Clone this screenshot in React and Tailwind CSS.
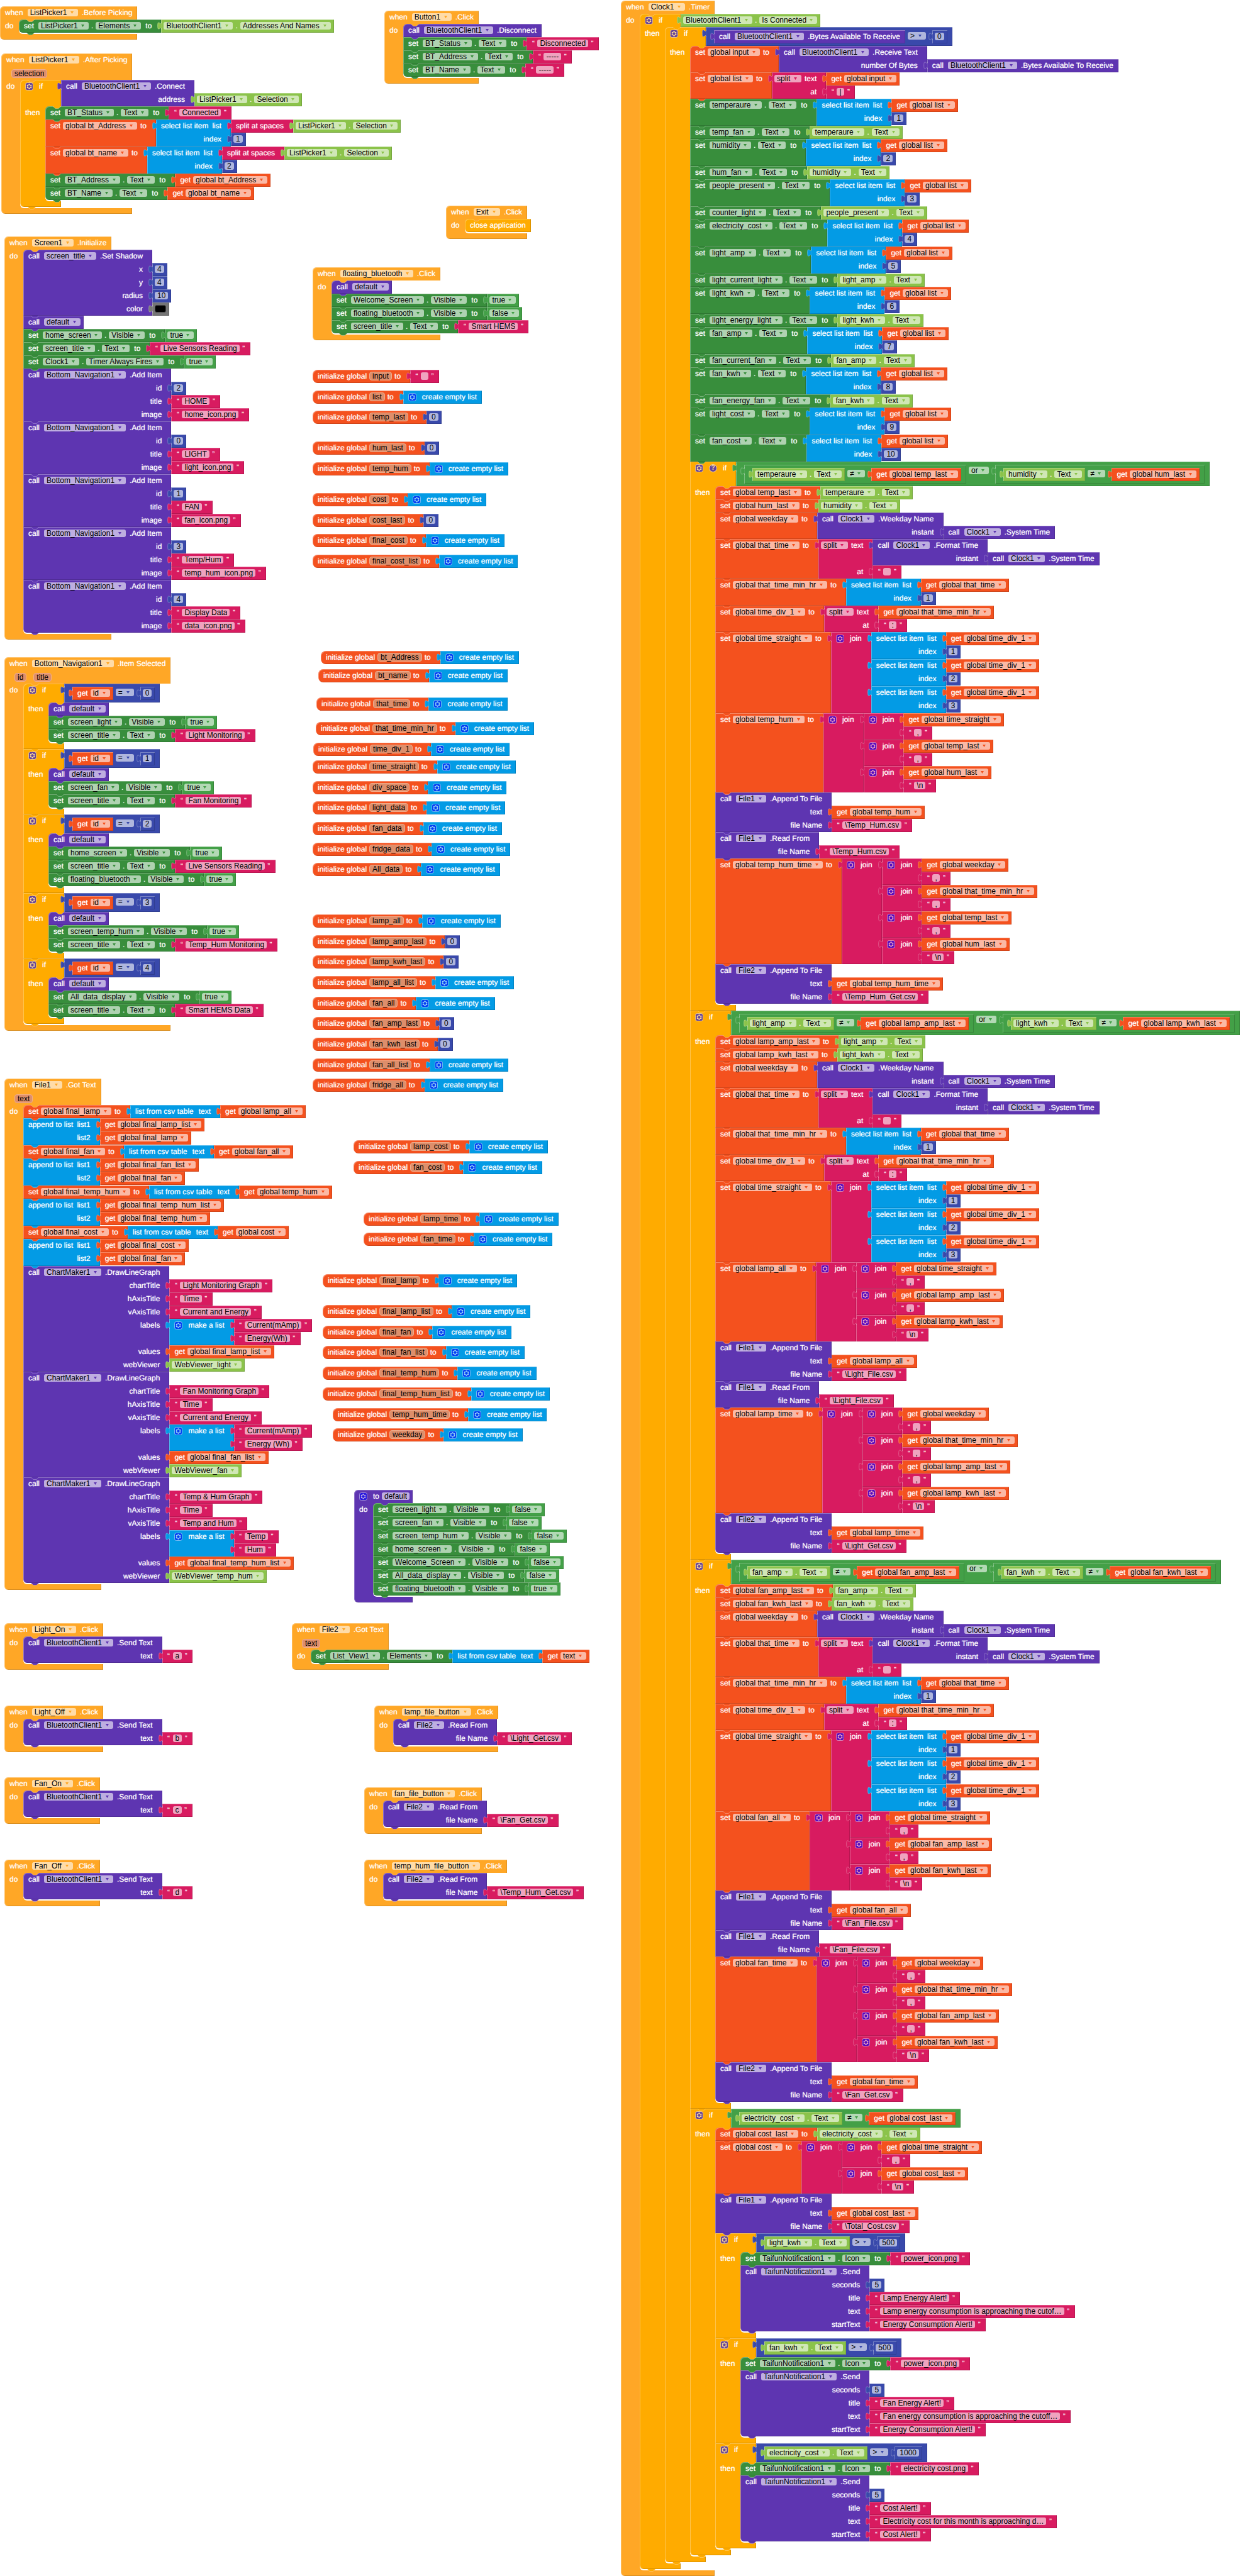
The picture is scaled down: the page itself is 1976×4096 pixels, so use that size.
import React from "react";

/* ---------- palette ---------- */

const COLORS = {
  event: { bg: "bg-[#ffa726]", ink: "text-[#ffa726]" },
  control: { bg: "bg-[#ffab00]", ink: "text-[#ffab00]" },
  logic: { bg: "bg-[#43a047]", ink: "text-[#43a047]" },
  math: { bg: "bg-[#3949ab]", ink: "text-[#3949ab]" },
  text: { bg: "bg-[#d81b60]", ink: "text-[#d81b60]" },
  list: { bg: "bg-[#039be5]", ink: "text-[#039be5]" },
  color: { bg: "bg-[#757575]", ink: "text-[#757575]" },
  variable: { bg: "bg-[#f4511e]", ink: "text-[#f4511e]" },
  method: { bg: "bg-[#5e35b1]", ink: "text-[#5e35b1]" },
  setter: { bg: "bg-[#388e3c]", ink: "text-[#388e3c]" },
  getter: { bg: "bg-[#8bc34a]", ink: "text-[#8bc34a]" },
};

const BEVEL =
  "shadow-[inset_1px_1px_0_rgba(255,255,255,0.3),inset_-1px_-1px_0_rgba(0,0,0,0.15)]";
const BEVEL_LAST =
  "rounded-bl-[6px] shadow-[inset_1px_1px_0_rgba(255,255,255,0.3),inset_-1px_-1px_0_rgba(0,0,0,0.15),0_2px_0_#ffffff]";
const LABEL = "text-white [text-shadow:0_0_1px_rgba(255,255,255,0.7)]";

/* ---------- field builders ---------- */

const lab = (t, c = "") => ({ kind: "label", t, c });
const dd = (t) => ({ kind: "drop", t });
const inp = (t, label) => ({ kind: "input", t, label });
const nam = (t) => ({ kind: "name", t });
const gear = { kind: "gear" };
const help = { kind: "help" };
const open = { kind: "quote", t: "\u201c" };
const close = { kind: "quote", t: "\u201d" };

/* ---------- value builders ---------- */

const get = (n) => ({ color: "variable", rows: [{ items: [lab("get"), dd(n)] }] });
const gget = (n) => get("global " + n);
const prop = (c, p) => ({ color: "getter", rows: [{ items: [dd(c), lab("."), dd(p)] }] });
const comp = (c) => ({ color: "getter", rows: [{ items: [dd(c)] }] });
const txt = (s) => ({ color: "text", rows: [{ items: [open, inp(s, "Text"), close] }] });
const num = (n) => ({ color: "math", rows: [{ items: [inp(String(n), "Number")] }] });
const bool = (v) => ({ color: "logic", rows: [{ items: [dd(v)] }] });
const emptyList = {
  color: "list",
  rows: [{ items: [gear, lab("create empty list")] }],
};
const select = (list, index) => ({
  color: "list",
  rows: [
    { items: [lab("select list item", "mr-0.5"), lab("list")], child: list },
    { items: [lab("index")], child: num(index), tall: true },
  ],
});
const split = (text, at) => ({
  color: "text",
  rows: [
    { items: [dd("split"), lab("text", "ml-px")], child: text },
    { items: [lab("at")], child: txt(at) },
  ],
});
const splitSpaces = (text) => ({
  color: "text",
  rows: [{ items: [lab("split at spaces")], child: text }],
});
const join = (...parts) => ({
  color: "text",
  rows: parts.map((child, i) => ({ items: i === 0 ? [gear, lab("join")] : [], child })),
});
const makeList = (...parts) => ({
  color: "list",
  rows: parts.map((child, i) => ({ items: i === 0 ? [gear, lab("make a list")] : [], child })),
});
const csv = (text) => ({
  color: "list",
  rows: [{ items: [lab("list from csv table", "mr-1"), lab("text")], child: text }],
});
const infix = (color, a, op, b) => ({ color, inline: true, a, op, b });

/* ---------- statement builders ---------- */

const call = (component, method, params = []) => ({
  color: "method",
  rows: [
    { items: [lab("call", "mr-[3px]"), dd(component), lab("." + method, "ml-0.5")] },
    ...params.map(([name, child]) => ({ items: [lab(name)], child })),
  ],
});
const callProc = (name) => ({
  color: "method",
  rows: [{ items: [lab("call", "mr-[3px]"), dd(name)] }],
});
const set = (c, p, child) => ({
  color: "setter",
  rows: [
    { items: [lab("set", "mr-[3px]"), dd(c), lab("."), dd(p), lab("to", "ml-[3px]")], child },
  ],
});
const gset = (n, child) => ({
  color: "variable",
  rows: [{ items: [lab("set"), dd("global " + n), lab("to", "ml-px")], child }],
});
const append = (a, b) => ({
  color: "list",
  rows: [
    { items: [lab("append to list", "mr-0.5"), lab("list1")], child: a },
    { items: [lab("list2")], child: b, tall: true },
  ],
});
const iff = (cond, body, extra = []) => ({
  clamp: true,
  color: "control",
  head: [gear, ...extra, lab("if")],
  cond,
  label: "then",
  body,
});
const when = (component, event, body, params) => ({
  clamp: true,
  top: true,
  color: "event",
  head: [lab("when", "mr-[3px]"), dd(component), lab("." + event, "ml-0.5")],
  params,
  label: "do",
  body,
});
const init = (name, child) => ({
  top: true,
  pill: true,
  color: "variable",
  rows: [{ items: [lab("initialize global"), nam(name), lab("to")], child }],
});

/* ---------- field rendering ---------- */

function Gear() {
  return (
    <button
      type="button"
      aria-label="Block options"
      className="mr-[5px] size-[13px] shrink-0 opacity-60"
    >
      <svg viewBox="0 0 16 16" className="block size-[13px]">
        <rect x="0.5" y="0.5" width="15" height="15" rx="4" fill="#0000ff" stroke="#ffffff" />
        <path
          fill="#ffffff"
          d="m4.203,7.296 0,1.368 -0.92,0.677 -0.11,0.41 0.9,1.59 0.41,0.11 1.043,-0.457 1.187,0.683 0.127,1.134 0.3,0.3 1.8,0 0.3,-0.299 0.127,-1.138 1.185,-0.682 1.046,0.458 0.409,-0.11 0.9,-1.59 -0.11,-0.41 -0.92,-0.677 0,-1.366 0.92,-0.677 0.11,-0.41 -0.9,-1.59 -0.409,-0.109 -1.046,0.458 -1.185,-0.682 -0.127,-1.138 -0.3,-0.299 -1.8,0 -0.3,0.3 -0.126,1.135 -1.187,0.682 -1.043,-0.457 -0.41,0.11 -0.899,1.59 0.108,0.409z"
        />
        <circle cx="8" cy="8" r="2.7" fill="#0000ff" />
      </svg>
    </button>
  );
}

function Help() {
  return (
    <button
      type="button"
      aria-label="Comment"
      className="mr-[5px] flex size-[13px] shrink-0 items-center justify-center rounded-full border border-white bg-[#0000ff] text-[10px] leading-none font-bold text-white opacity-60"
    >
      ?
    </button>
  );
}

function Drop({ t, color }) {
  return (
    <span
      className={
        "relative flex h-3 shrink-0 items-center rounded-[3px] bg-white/60 " + COLORS[color].ink
      }
    >
      <select
        aria-label={t}
        className="-my-1 h-5 appearance-none bg-transparent pr-[17px] pl-1 text-[12px] leading-5 text-black outline-none"
      >
        <option>{t}</option>
      </select>
      <svg
        viewBox="0 0 5 4"
        className="pointer-events-none absolute top-1 right-[7px] h-1 w-[5px]"
      >
        <path d="M0 0h5L2.5 4z" fill="currentColor" />
      </svg>
    </span>
  );
}

function TextBox({ label, value, box }) {
  return (
    <span className={"flex min-w-3 shrink-0 items-center " + box}>
      <input
        type="text"
        aria-label={label}
        defaultValue={value}
        className="-my-1 field-sizing-content h-5 min-w-3 bg-transparent px-1 text-[12px] leading-5 text-black outline-none"
      />
    </span>
  );
}

function Field({ f, color }) {
  switch (f.kind) {
    case "label":
      return <span className={"whitespace-pre " + LABEL + " " + f.c}>{f.t}</span>;
    case "drop":
      return <Drop t={f.t} color={color} />;
    case "input":
      return <TextBox label={f.label} value={f.t} box="h-3 rounded-[3px] bg-white/60" />;
    case "name":
      return (
        <TextBox
          label="Name"
          value={f.t}
          box="h-[14px] rounded-[4px] border border-[#f0ad8c] bg-[#dd8e6b]"
        />
      );
    case "quote":
      return (
        <span className="w-[5px] self-start pt-[3px] text-center text-[9px] leading-[12px] font-bold text-white">
          {f.t}
        </span>
      );
    case "swatch":
      return (
        <button
          type="button"
          aria-label="Black"
          className="h-3 w-[18px] rounded-[3px] border border-[#4a4a4a] bg-black"
        />
      );
    case "help":
      return <Help />;
    default:
      return <Gear />;
  }
}

const isBox = (f) => f && ["drop", "input", "swatch"].includes(f.kind);

function Tab({ color }) {
  return (
    <svg
      viewBox="0 0 8 15"
      className={"absolute top-1 -left-[6px] h-3 w-[7px] " + COLORS[color].ink}
    >
      <path d="M8 0c0 10-8-8-8 7.5s8-2.5 8 7.5z" fill="currentColor" />
      <path
        d="M8 0c0 10-7.500-8-7.500 7.500s7.500-2.500 7.500 7.500"
        fill="none"
        stroke="#ffffff"
        strokeOpacity="0.35"
      />
    </svg>
  );
}

function Bump({ color, place }) {
  return (
    <svg
      viewBox="0 0 13 4"
      className={"absolute z-10 h-1 w-[13px] " + place + " " + COLORS[color].ink}
    >
      <path d="M0 0h13L9 3.5H4z" fill="currentColor" />
      <path d="M0 0L4 3.5H9L13 0" fill="none" stroke="#ffffff" strokeOpacity="0.3" />
    </svg>
  );
}

/* ---------- block rendering ---------- */

function LabelCell({ row, color, hasInputs, line }) {
  const first = row.items[0];
  const last = row.items[row.items.length - 1];
  const left = isBox(first) ? "pl-1" : "pl-2";
  const right = row.child || hasInputs ? "pr-[15px]" : isBox(last) ? "pr-[5px]" : "pr-2";
  const align = row.child ? "justify-end" : "justify-start";
  const height = row.tall ? "h-[22px]" : "h-[21px]";
  return (
    <div className={"relative col-start-1 " + height} style={{ gridRow: line }}>
      <div className={"flex h-5 items-center gap-1 " + left + " " + right + " " + align}>
        {row.items.map((f, i) => (
          <Field key={i} f={f} color={color} />
        ))}
      </div>
    </div>
  );
}

function Rows({ b, shape }) {
  const hasInputs = b.rows.some((r) => r.child);
  return (
    <div
      className="grid grid-cols-[max-content_max-content] items-start"
      style={{ gridTemplateRows: "repeat(" + b.rows.length + ", auto)" }}
    >
      <div
        className={"relative col-start-1 row-span-full h-full " + COLORS[b.color].bg + " " + shape}
      />
      {b.rows.map((r, i) => (
        <React.Fragment key={i}>
          <LabelCell row={r} color={b.color} hasInputs={hasInputs} line={i + 1} />
          {r.child && (
            <div className="col-start-2 flex items-start" style={{ gridRow: i + 1 }}>
              <Value b={r.child} />
            </div>
          )}
        </React.Fragment>
      ))}
    </div>
  );
}

function Value({ b }) {
  if (b.inline) {
    return (
      <div
        className={
          "relative flex items-start pt-[5px] pr-2 pb-1 pl-[13px] " + COLORS[b.color].bg + " " + BEVEL
        }
      >
        <Tab color={b.color} />
        <Value b={b.a} />
        <div className="mt-[3px] mr-[10px] ml-1">
          <Drop t={b.op} color={b.color} />
        </div>
        <Value b={b.b} />
      </div>
    );
  }
  return (
    <div className="relative">
      <Rows b={b} shape={BEVEL} />
      <Tab color={b.color} />
    </div>
  );
}

function Stack({ list }) {
  return (
    <div className="relative flex shrink-0 flex-col items-start pb-0.5">
      {list.map((s, i) => (
        <Statement key={i} b={s} first={i === 0} last={i === list.length - 1} />
      ))}
    </div>
  );
}

function Statement({ b, first, last }) {
  const topCorner = first || b.top ? " rounded-tl-[6px]" : "";
  if (!b.clamp) {
    const bottom = b.pill ? BEVEL + " rounded-l-[8px]" : last ? BEVEL_LAST : BEVEL;
    return (
      <div className="relative">
        <Rows b={b} shape={bottom + (b.pill ? "" : topCorner)} />
        {!b.top && !b.end && <Bump color={b.color} place="top-full left-3" />}
      </div>
    );
  }
  const bg = COLORS[b.color].bg;
  const isIf = b.label === "then";
  return (
    <div className="relative grid grid-cols-[max-content_max-content] items-start">
      <div
        className={
          "h-full shadow-[inset_1px_1px_0_rgba(255,255,255,0.3),inset_-1px_0_0_rgba(0,0,0,0.12)] " +
          bg +
          topCorner +
          (isIf ? " min-w-[65px]" : "")
        }
      >
        <div
          className={
            "flex h-5 items-center gap-1 pl-2 " +
            (isIf ? "pr-[15px]" : isBox(b.head[b.head.length - 1]) ? "pr-[5px]" : "pr-2")
          }
        >
          {b.head.map((f, i) => (
            <Field key={i} f={f} color={b.color} />
          ))}
        </div>
        <div className="h-px" />
        {b.params && (
          <div className="flex h-[21px] items-center gap-[11px] pl-4">
            {b.params.map((p) => (
              <Field key={p} f={nam(p)} color={b.color} />
            ))}
          </div>
        )}
      </div>
      <div className="col-start-2 flex">{b.cond && <Value b={b.cond} />}</div>
      <div className="col-start-1 flex w-0">
        <div
          className={
            "-mr-[6px] shrink-0 pl-2 shadow-[inset_1px_0_0_rgba(255,255,255,0.3)] " +
            LABEL +
            " " +
            bg +
            (isIf ? " w-[46px]" : " w-9")
          }
        >
          <div className="flex h-5 items-center">{b.label}</div>
        </div>
        <div className="relative shrink-0">
          <Stack list={b.body} />
          <Bump color={b.color} place="top-0 left-3" />
        </div>
      </div>
      <div
        className={
          "relative col-start-1 h-[9px] " +
          bg +
          (b.top
            ? " rounded-bl-[6px] shadow-[inset_1px_0_0_rgba(255,255,255,0.3),inset_-1px_-1px_0_rgba(0,0,0,0.15)]"
            : last
              ? " rounded-bl-[6px] shadow-[inset_1px_0_0_rgba(255,255,255,0.3),inset_-1px_-1px_0_rgba(0,0,0,0.15),0_2px_0_#ffffff]"
              : " shadow-[inset_1px_0_0_rgba(255,255,255,0.3),inset_-1px_-1px_0_rgba(0,0,0,0.15)]")
        }
      />
      {!b.top && <Bump color={b.color} place="top-full left-3" />}
    </div>
  );
}

/* ---------- program ---------- */

const navItem = (id, title, image) =>
  call("Bottom_Navigation1", "Add Item", [
    ["id", num(id)],
    ["title", txt(title)],
    ["image", txt(image)],
  ]);

const navCase = (id, body) => iff(infix("math", get("id"), "=", num(id)), [callProc("default"), ...body]);

const show = (c, v = "true") => set(c, "Visible", bool(v));
const title = (t) => set("screen_title", "Text", txt(t));

const chart = (name, axis, labels, values, viewer) =>
  call("ChartMaker1", "DrawLineGraph", [
    ["chartTitle", txt(name)],
    ["hAxisTitle", txt("Time")],
    ["vAxisTitle", txt(axis)],
    ["labels", makeList(...labels.map(txt))],
    ["values", gget(values)],
    ["webViewer", comp(viewer)],
  ]);

const sendText = (button, t) =>
  when(button, "Click", [call("BluetoothClient1", "Send Text", [["text", txt(t)]])]);

const readFile = (button, file) =>
  when(button, "Click", [call("File2", "Read From", [["file Name", txt(file)]])]);

const reading = (label, index) => set(label, "Text", select(gget("list"), index));
const mirror = (label, source) => set(label, "Text", prop(source, "Text"));
const differs = (label, last) => infix("logic", prop(label, "Text"), "\u2260", gget(last));
const systemTime = call("Clock1", "System Time");

const joined = (parts) =>
  join(...parts.map((p, i) => join(gget(p), txt(i === parts.length - 1 ? "\\n" : ","))));

const logSection = ({ a, b, all, time, file, getFile, extra }) =>
  iff(
    infix("logic", differs(a[0], a[1]), "or", differs(b[0], b[1])),
    [
      gset(a[1], prop(a[0], "Text")),
      gset(b[1], prop(b[0], "Text")),
      gset("weekday", call("Clock1", "Weekday Name", [["instant", systemTime]])),
      gset("that_time", split(call("Clock1", "Format Time", [["instant", systemTime]]), " ")),
      gset("that_time_min_hr", select(gget("that_time"), 1)),
      gset("time_div_1", split(gget("that_time_min_hr"), ":")),
      gset(
        "time_straight",
        join(
          select(gget("time_div_1"), 1),
          select(gget("time_div_1"), 2),
          select(gget("time_div_1"), 3)
        )
      ),
      gset(all, joined(["time_straight", a[1], b[1]])),
      call("File1", "Append To File", [
        ["text", gget(all)],
        ["file Name", txt(file)],
      ]),
      call("File1", "Read From", [["file Name", txt(file)]]),
      gset(time, joined(["weekday", "that_time_min_hr", a[1], b[1]])),
      call("File2", "Append To File", [
        ["text", gget(time)],
        ["file Name", txt(getFile)],
      ]),
    ],
    extra
  );

const alertCase = (label, limit, icon, name, message, start) =>
  iff(infix("math", prop(label, "Text"), ">", num(limit)), [
    set("TaifunNotification1", "Icon", txt(icon)),
    call("TaifunNotification1", "Send", [
      ["seconds", num(5)],
      ["title", txt(name)],
      ["text", txt(message)],
      ["startText", txt(start)],
    ]),
  ]);

const timer = when("Clock1", "Timer", [
  iff(prop("BluetoothClient1", "Is Connected"), [
    iff(
      infix("math", call("BluetoothClient1", "Bytes Available To Receive"), ">", num(0)),
      [
        gset(
          "input",
          call("BluetoothClient1", "Receive Text", [
            ["number Of Bytes", call("BluetoothClient1", "Bytes Available To Receive")],
          ])
        ),
        gset("list", split(gget("input"), "|")),
        reading("temperaure", 1),
        mirror("temp_fan", "temperaure"),
        reading("humidity", 2),
        mirror("hum_fan", "humidity"),
        reading("people_present", 3),
        mirror("counter_light", "people_present"),
        reading("electricity_cost", 4),
        reading("light_amp", 5),
        mirror("light_current_light", "light_amp"),
        reading("light_kwh", 6),
        mirror("light_energy_light", "light_kwh"),
        reading("fan_amp", 7),
        mirror("fan_current_fan", "fan_amp"),
        reading("fan_kwh", 8),
        mirror("fan_energy_fan", "fan_kwh"),
        reading("light_cost", 9),
        reading("fan_cost", 10),
        logSection({
          a: ["temperaure", "temp_last"],
          b: ["humidity", "hum_last"],
          all: "temp_hum",
          time: "temp_hum_time",
          file: "\\Temp_Hum.csv",
          getFile: "\\Temp_Hum_Get.csv",
          extra: [help],
        }),
        logSection({
          a: ["light_amp", "lamp_amp_last"],
          b: ["light_kwh", "lamp_kwh_last"],
          all: "lamp_all",
          time: "lamp_time",
          file: "\\Light_File.csv",
          getFile: "\\Light_Get.csv",
        }),
        logSection({
          a: ["fan_amp", "fan_amp_last"],
          b: ["fan_kwh", "fan_kwh_last"],
          all: "fan_all",
          time: "fan_time",
          file: "\\Fan_File.csv",
          getFile: "\\Fan_Get.csv",
        }),
        iff(differs("electricity_cost", "cost_last"), [
          gset("cost_last", prop("electricity_cost", "Text")),
          gset("cost", joined(["time_straight", "cost_last"])),
          call("File1", "Append To File", [
            ["text", gget("cost_last")],
            ["file Name", txt("\\Total_Cost.csv")],
          ]),
          alertCase(
            "light_kwh",
            500,
            "power_icon.png",
            "Lamp Energy Alert!",
            "Lamp energy consumption is approaching the cutof\u2026",
            "Energy Consumption Alert!"
          ),
          alertCase(
            "fan_kwh",
            500,
            "power_icon.png",
            "Fan Energy Alert!",
            "Fan energy consumption is approaching the cutoff\u2026",
            "Energy Consumption Alert!"
          ),
          alertCase(
            "electricity_cost",
            1000,
            "electricity cost.png",
            "Cost Alert!",
            "Electricity cost for this month is approaching d\u2026",
            "Cost Alert!"
          ),
        ]),
      ]
    ),
  ]),
]);

const defaultProc = {
  clamp: true,
  top: true,
  color: "method",
  head: [gear, lab("to"), inp("default", "Procedure name")],
  label: "do",
  body: [
    show("screen_light", "false"),
    show("screen_fan", "false"),
    show("screen_temp_hum", "false"),
    show("home_screen", "false"),
    show("Welcome_Screen", "false"),
    show("All_data_display", "false"),
    show("floating_bluetooth"),
  ],
};

/* Places of the top-level blocks on the workspace: x, y, block. */
const WORKSPACE = [
  [0, 10, when("ListPicker1", "Before Picking", [
    set("ListPicker1", "Elements", prop("BluetoothClient1", "Addresses And Names")),
  ])],
  [2, 85, when("ListPicker1", "After Picking", [
    iff(call("BluetoothClient1", "Connect", [["address", prop("ListPicker1", "Selection")]]), [
      set("BT_Status", "Text", txt("Connected")),
      gset("bt_Address", select(splitSpaces(prop("ListPicker1", "Selection")), 1)),
      gset("bt_name", select(splitSpaces(prop("ListPicker1", "Selection")), 2)),
      set("BT_Address", "Text", gget("bt_Address")),
      set("BT_Name", "Text", gget("bt_name")),
    ]),
  ], ["selection"])],
  [7, 376, when("Screen1", "Initialize", [
    call("screen_title", "Set Shadow", [
      ["x", num(4)],
      ["y", num(4)],
      ["radius", num(10)],
      ["color", { color: "color", rows: [{ items: [{ kind: "swatch" }] }] }],
    ]),
    callProc("default"),
    show("home_screen"),
    title("Live Sensors Reading"),
    set("Clock1", "Timer Always Fires", bool("true")),
    navItem(2, "HOME", "home_icon.png"),
    navItem(0, "LIGHT", "light_icon.png"),
    navItem(1, "FAN", "fan_icon.png"),
    navItem(3, "Temp/Hum", "temp_hum_icon.png"),
    navItem(4, "Display Data", "data_icon.png"),
  ])],
  [7, 1045, when("Bottom_Navigation1", "Item Selected", [
    navCase(0, [show("screen_light"), title("Light Monitoring")]),
    navCase(1, [show("screen_fan"), title("Fan Monitoring")]),
    navCase(2, [show("home_screen"), title("Live Sensors Reading"), show("floating_bluetooth")]),
    navCase(3, [show("screen_temp_hum"), title("Temp_Hum Monitoring")]),
    navCase(4, [show("All_data_display"), title("Smart HEMS Data")]),
  ], ["id", "title"])],
  [7, 1715, when("File1", "Got Text", [
    gset("final_lamp", csv(gget("lamp_all"))),
    append(gget("final_lamp_list"), gget("final_lamp")),
    gset("final_fan", csv(gget("fan_all"))),
    append(gget("final_fan_list"), gget("final_fan")),
    gset("final_temp_hum", csv(gget("temp_hum"))),
    append(gget("final_temp_hum_list"), gget("final_temp_hum")),
    gset("final_cost", csv(gget("cost"))),
    append(gget("final_cost"), gget("final_fan")),
    chart("Light Monitoring Graph", "Current and Energy", ["Current(mAmp)", "Energy(Wh)"], "final_lamp_list", "WebViewer_light"),
    chart("Fan Monitoring Graph", "Current and Energy", ["Current(mAmp)", "Energy (Wh)"], "final_fan_list", "WebViewer_fan"),
    chart("Temp & Hum Graph", "Temp and Hum", ["Temp", "Hum"], "final_temp_hum_list", "WebViewer_temp_hum"),
  ], ["text"])],
  [7, 2581, sendText("Light_On", "a")],
  [7, 2712, sendText("Light_Off", "b")],
  [7, 2826, sendText("Fan_On", "c")],
  [7, 2957, sendText("Fan_Off", "d")],
  [611, 17, when("Button1", "Click", [
    call("BluetoothClient1", "Disconnect"),
    set("BT_Status", "Text", txt("Disconnected")),
    set("BT_Address", "Text", txt("-----")),
    set("BT_Name", "Text", txt("-----")),
  ])],
  [709, 327, when("Exit", "Click", [
    { color: "control", end: true, rows: [{ items: [lab("close application")] }] },
  ])],
  [497, 425, when("floating_bluetooth", "Click", [
    callProc("default"),
    show("Welcome_Screen"),
    show("floating_bluetooth", "false"),
    title("Smart HEMS"),
  ])],
  [497, 588, init("input", txt(""))],
  [497, 621, init("list", emptyList)],
  [497, 653, init("temp_last", num(0))],
  [497, 702, init("hum_last", num(0))],
  [497, 735, init("temp_hum", emptyList)],
  [497, 784, init("cost", emptyList)],
  [497, 817, init("cost_last", num(0))],
  [497, 849, init("final_cost", emptyList)],
  [497, 882, init("final_cost_list", emptyList)],
  [510, 1035, init("bt_Address", emptyList)],
  [506, 1064, init("bt_name", emptyList)],
  [503, 1109, init("that_time", emptyList)],
  [502, 1148, init("that_time_min_hr", emptyList)],
  [498, 1181, init("time_div_1", emptyList)],
  [497, 1209, init("time_straight", emptyList)],
  [497, 1242, init("div_space", emptyList)],
  [497, 1274, init("light_data", emptyList)],
  [497, 1307, init("fan_data", emptyList)],
  [497, 1340, init("fridge_data", emptyList)],
  [497, 1372, init("All_data", emptyList)],
  [497, 1454, init("lamp_all", emptyList)],
  [497, 1487, init("lamp_amp_last", num(0))],
  [497, 1519, init("lamp_kwh_last", num(0))],
  [497, 1552, init("lamp_all_list", emptyList)],
  [497, 1585, init("fan_all", emptyList)],
  [497, 1617, init("fan_amp_last", num(0))],
  [497, 1650, init("fan_kwh_last", num(0))],
  [497, 1683, init("fan_all_list", emptyList)],
  [497, 1715, init("fridge_all", emptyList)],
  [562, 1813, init("lamp_cost", emptyList)],
  [562, 1846, init("fan_cost", emptyList)],
  [578, 1928, init("lamp_time", emptyList)],
  [578, 1960, init("fan_time", emptyList)],
  [513, 2026, init("final_lamp", emptyList)],
  [513, 2075, init("final_lamp_list", emptyList)],
  [513, 2108, init("final_fan", emptyList)],
  [513, 2140, init("final_fan_list", emptyList)],
  [513, 2173, init("final_temp_hum", emptyList)],
  [513, 2206, init("final_temp_hum_list", emptyList)],
  [529, 2239, init("temp_hum_time", emptyList)],
  [529, 2271, init("weekday", emptyList)],
  [563, 2369, defaultProc],
  [464, 2581, when("File2", "Got Text", [set("List_View1", "Elements", csv(get("text")))], ["text"])],
  [595, 2712, readFile("lamp_file_button", "\\Light_Get.csv")],
  [579, 2842, readFile("fan_file_button", "\\Fan_Get.csv")],
  [579, 2957, readFile("temp_hum_file_button", "\\Temp_Hum_Get.csv")],
  [987, 1, timer],
];

export default function App() {
  return (
    <main className="relative min-h-screen overflow-hidden bg-white font-['Liberation_Sans',Arial,sans-serif] text-[12px] leading-[14px] [text-rendering:geometricPrecision]">
      {WORKSPACE.map(([x, y, b], i) => (
        <div key={i} className="absolute" style={{ left: x, top: y }}>
          <Statement b={b} />
        </div>
      ))}
    </main>
  );
}
